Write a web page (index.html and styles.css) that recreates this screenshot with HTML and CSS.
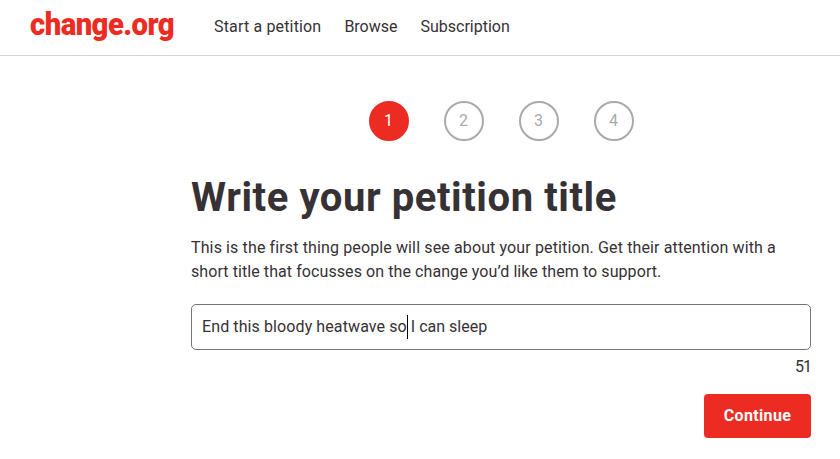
FILE: index.html
```html
<!DOCTYPE html>
<html lang="en">
  <head>
    <meta charset="UTF-8" />
    <meta name="viewport" content="width=device-width, initial-scale=1.0" />
    <title>Start a petition</title>
    <link rel="stylesheet" href="styles.css">
  </head>
  <body>
    <header class="header">
      <a class="logo" href="#">change.org</a>
      <nav class="nav">
        <a class="nav-start" href="#">Start a petition</a>
        <a class="nav-browse" href="#">Browse</a>
        <a class="nav-subscription" href="#">Subscription</a>
      </nav>
    </header>

    <main class="container">
      <ol class="steps">
        <li class="step active">1</li>
        <li class="step">2</li>
        <li class="step">3</li>
        <li class="step">4</li>
      </ol>

      <h1 class="title">Write your petition title</h1>
      <p class="intro">
        <span class="intro-first">This is the first thing people will see about your petition. Get their attention with a</span><br />
        <span class="intro-second">short title that focusses on the change you’d like them to support.</span>
      </p>

      <div class="field" role="textbox" contenteditable="true"><span class="before">End this bloody heatwave so</span><span class="caret"></span><span class="after">I can sleep</span></div>
      <div class="counter">51</div>

      <div class="actions">
        <button class="continue">Continue</button>
      </div>
    </main>
  </body>
</html>
```

FILE: styles.css
```css
body {
  margin: 0;
  font-family: Roboto, sans-serif;
  font-size: 16px;
  line-height: 24px;
  color: #363135;
  background: white;
}
a {
  color: inherit;
  text-decoration: none;
}
.header {
  display: flex;
  align-items: center;
  box-sizing: border-box;
  height: 56px;
  padding: 0 30px 2px;
  border-bottom: 1px solid #d3d3d3;
}
.logo {
  width: 184px;
  padding-bottom: 4px;
  font-size: 31px;
  font-weight: 900;
  letter-spacing: -0.6px;
  color: #ec2c22;
  transform: scaleX(0.945);
  transform-origin: left;
}
.nav {
  display: flex;
  gap: 23px;
}
.nav-start {
  letter-spacing: 0.16px;
}
.container {
  width: 620px;
  margin: 45px 0 0 191px;
}
.steps {
  display: flex;
  justify-content: center;
  gap: 35px;
  margin: 0;
  padding: 0;
  list-style: none;
}
.step {
  box-sizing: border-box;
  width: 40px;
  height: 40px;
  border: 2px solid #aaa;
  border-radius: 50%;
  line-height: 35px;
  text-align: center;
  color: #aaa;
}
.step.active {
  border-color: #ec2c22;
  background: #ec2c22;
  color: white;
}
.title {
  margin: 33px 0 14px;
  font-size: 40px;
  line-height: 48px;
  font-weight: bold;
  letter-spacing: 0.58px;
}
.intro {
  margin: 0 0 20px;
  white-space: nowrap;
}
.intro-first {
  letter-spacing: 0.125px;
}
.intro-second {
  letter-spacing: 0.08px;
}
.field {
  display: flex;
  align-items: center;
  box-sizing: border-box;
  height: 46px;
  padding: 0 11px 0 10px;
  border: 1px solid #767676;
  border-radius: 5px;
  outline: none;
}
.before {
  letter-spacing: 0.1px;
}
.caret {
  width: 1px;
  height: 24px;
  margin-right: 3px;
  background: black;
}
.counter {
  margin-top: 5px;
  text-align: right;
  letter-spacing: -1px;
}
.actions {
  display: flex;
  justify-content: flex-end;
  margin-top: 15px;
}
.continue {
  width: 107px;
  height: 44px;
  padding: 0 0 2px;
  border: none;
  border-radius: 4px;
  background: #ec2c22;
  color: white;
  font: bold 16px Roboto, sans-serif;
  letter-spacing: 0.35px;
  cursor: pointer;
}
```
